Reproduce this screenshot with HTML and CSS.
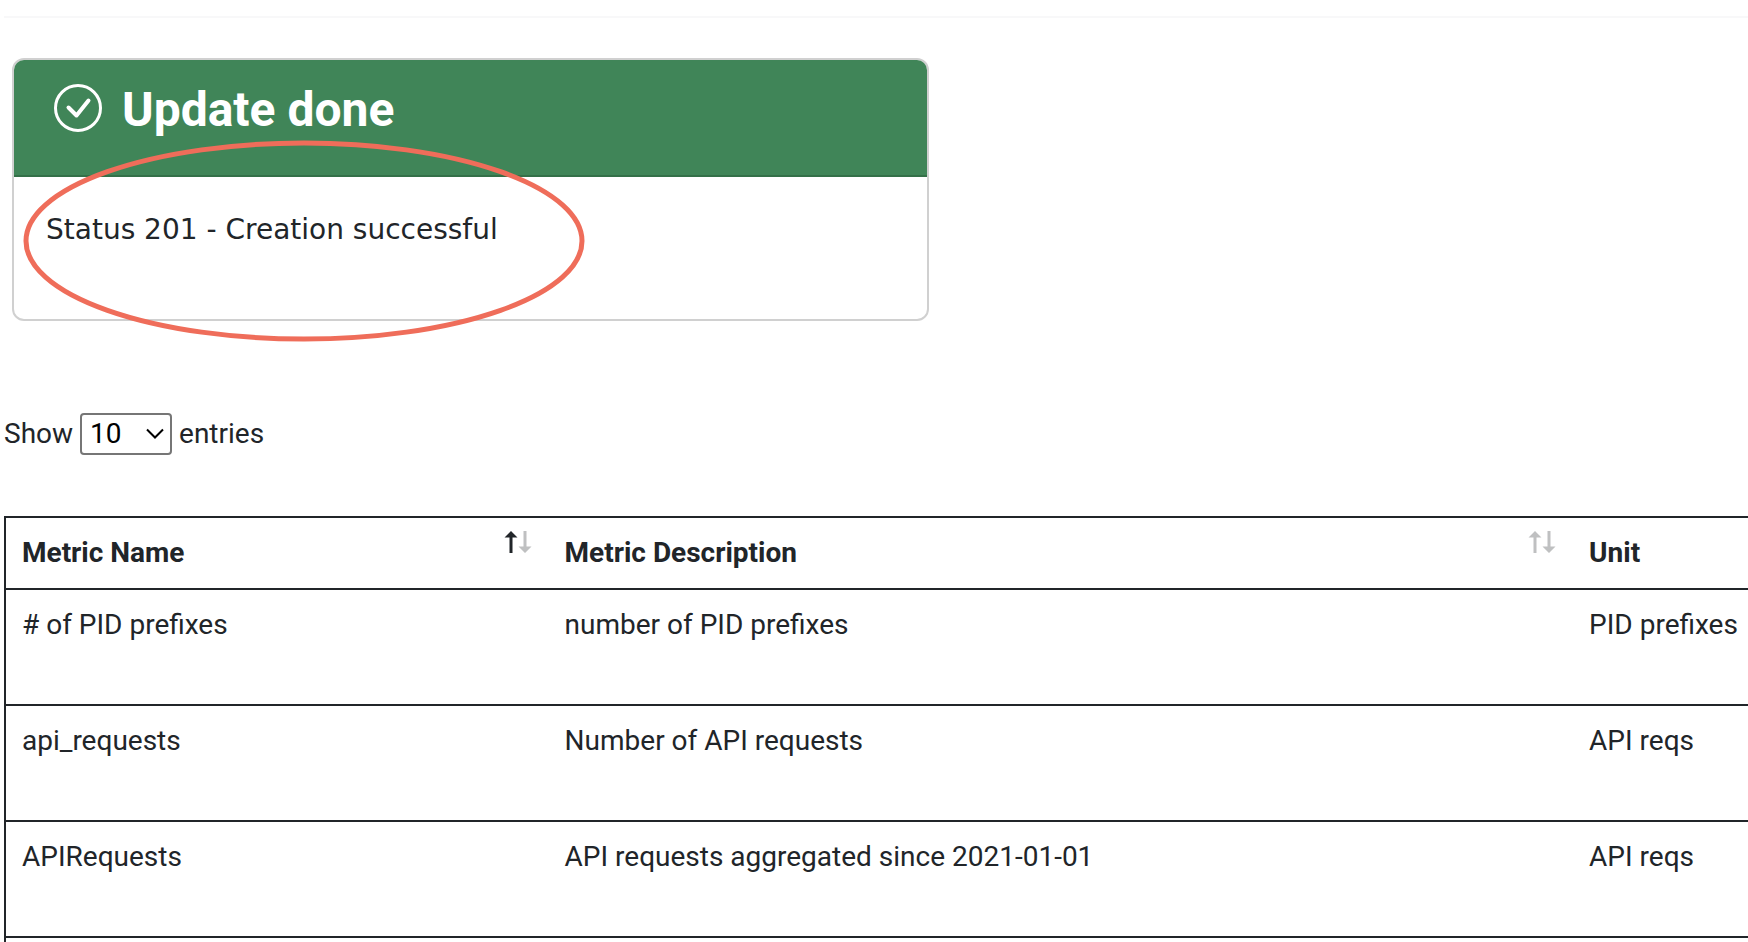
FILE: index.html
```html
<!DOCTYPE html>
<html lang="en">
<head>
<meta charset="utf-8">
<title>Metrics</title>
<link rel="stylesheet" href="styles.css">
</head>
<body>
<main class="page">
  <hr class="divider">

  <section class="card">
    <header class="card-header">
      <svg class="card-icon" viewBox="0 0 48 48" aria-hidden="true">
        <circle cx="24" cy="24" r="22.5"/>
        <path class="tick" d="M14.5 23.5l8 8L34.500 16.500"/>
      </svg>
      <h1 class="card-title">Update done</h1>
    </header>
    <p class="card-body">Status 201 - Creation successful</p>
    <svg class="marker" viewBox="0 0 562 202" aria-hidden="true">
      <ellipse cx="281" cy="101" rx="278" ry="98"/>
    </svg>
  </section>

  <div class="length">
    <label for="length">Show</label>
    <span class="select">
      <select id="length" aria-label="Entries per page">
        <option>10</option>
        <option>25</option>
        <option>50</option>
        <option>100</option>
      </select>
      <svg class="chevron" viewBox="0 0 18 12" aria-hidden="true"><path d="M1 1.500l8 8 8-8"/></svg>
    </span>
    <span>entries</span>
  </div>

  <table class="metrics">
    <colgroup>
      <col class="col-name">
      <col class="col-description">
      <col>
    </colgroup>
    <thead>
      <tr>
        <th scope="col">
          <div class="heading">Metric Name
            <svg class="sort" viewBox="0 0 28 24" aria-hidden="true">
              <path class="active" d="M6 1l6.500 6.500H7.500V23h-3V7.500H-.5z"/>
              <path d="M20 23l-6.500-6.500h5V1h3v15.500h5z"/>
            </svg>
          </div>
        </th>
        <th scope="col">
          <div class="heading">Metric Description
            <svg class="sort" viewBox="0 0 28 24" aria-hidden="true">
              <path d="M6 1l6.500 6.500H7.500V23h-3V7.500H-.5z"/>
              <path d="M20 23l-6.500-6.500h5V1h3v15.500h5z"/>
            </svg>
          </div>
        </th>
        <th scope="col">Unit</th>
      </tr>
    </thead>
    <tbody>
      <tr><td># of PID prefixes</td><td>number of PID prefixes</td><td>PID prefixes</td></tr>
      <tr><td>api_requests</td><td>Number of API requests</td><td>API reqs</td></tr>
      <tr><td>APIRequests</td><td>API requests aggregated since 2021-01-01</td><td>API reqs</td></tr>
      <tr><td></td><td></td><td></td></tr>
    </tbody>
  </table>
</main>
</body>
</html>
```
FILE: styles.css
```css
* {
  box-sizing: border-box;
}

html {
  overflow: hidden;
}

body {
  margin: 0;
  background: #fff;
  color: #212529;
  font: 28px/42px Roboto, sans-serif;
}

.page {
  padding: 16px 0 0 4px;
}

.divider {
  height: 2px;
  margin: 0 0 40px;
  border: 0;
  background: #f8f8f9;
}

.card {
  position: relative;
  width: 52.6%;
  margin: 0 0 92px 8px;
  border: 2px solid #d0d0d0;
  border-radius: 12px;
}

.card-header {
  display: flex;
  align-items: flex-start;
  gap: 20px;
  padding: 22px 40px 37px;
  border-bottom: 2px solid #347048;
  border-radius: 10px 10px 0 0;
  background: #408558;
  color: #fff;
}

.card-icon {
  width: 48px;
  height: 48px;
  margin-top: 2px;
  fill: none;
  stroke: #fff;
  stroke-width: 3;
}

.card-icon .tick {
  stroke-width: 4;
  stroke-linecap: round;
  stroke-linejoin: round;
}

.card-title {
  margin: 0;
  font-size: 48px;
  line-height: 56px;
}

.card-body {
  margin: 0;
  padding: 32px 32px 68px;
  font-family: Verdana, "DejaVu Sans", sans-serif;
}

.marker {
  position: absolute;
  top: 80px;
  left: 9px;
  width: 562px;
  height: 202px;
  fill: none;
  stroke: #ef6d5a;
  stroke-width: 5;
}

.length {
  display: flex;
  align-items: center;
  gap: 7px;
  margin-bottom: 61px;
}

.select {
  position: relative;
}

.select select {
  display: block;
  width: 92px;
  height: 42px;
  padding: 0 8px;
  appearance: none;
  border: 2px solid #767676;
  border-radius: 4px;
  background: #fff;
  color: #000;
  font: inherit;
  line-height: 36px;
}

.chevron {
  position: absolute;
  top: 15px;
  right: 8px;
  width: 18px;
  height: 12px;
  fill: none;
  stroke: #000;
  stroke-width: 2;
  pointer-events: none;
}

.metrics {
  width: 120%;
  table-layout: fixed;
  border: 2px solid #212529;
  border-collapse: collapse;
}

.col-name {
  width: 26%;
}

.col-description {
  width: 49%;
}

.metrics th,
.metrics td {
  padding: 14px 16px;
  border-bottom: 2px solid #212529;
  text-align: left;
  vertical-align: top;
}

.metrics td {
  height: 116px;
}

.heading {
  display: flex;
  align-items: flex-start;
  justify-content: space-between;
}

.sort {
  width: 28px;
  height: 24px;
  margin-top: -2px;
  overflow: visible;
  fill: #bfc0c1;
}

.sort .active {
  fill: #212529;
}
```
